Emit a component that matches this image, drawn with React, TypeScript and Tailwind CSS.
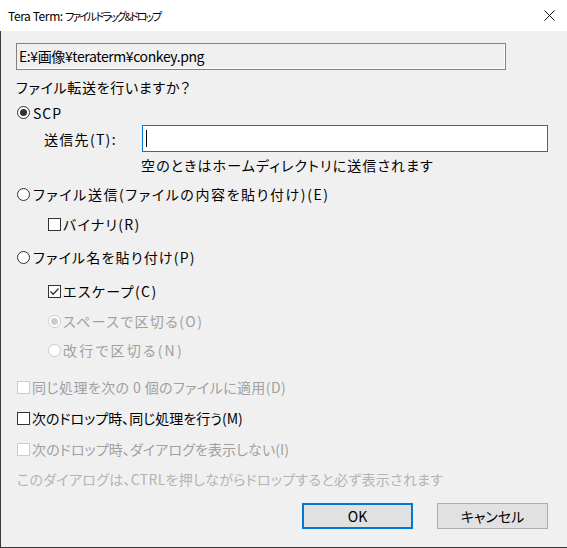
import React from 'react';

const font = { fontFamily: '"Noto Sans CJK JP", "Noto Sans", sans-serif' };

function Radio({ checked, disabled }: { checked?: boolean; disabled?: boolean }) {
  return (
    <span
      className={`flex h-[13px] w-[13px] shrink-0 items-center justify-center rounded-full border bg-white ${
        disabled ? 'border-[#cccccc]' : 'border-[#333333]'
      }`}
    >
      {checked && (
        <span className={`h-[7px] w-[7px] rounded-full ${disabled ? 'bg-[#cccccc]' : 'bg-[#333333]'}`} />
      )}
    </span>
  );
}

function Check({ checked, disabled }: { checked?: boolean; disabled?: boolean }) {
  return (
    <span
      className={`flex h-[13px] w-[13px] shrink-0 items-center justify-center border bg-white ${
        disabled ? 'border-[#cccccc]' : 'border-[#333333]'
      }`}
    >
      {checked && (
        <svg width="11" height="11" viewBox="0 0 11 11">
          <path d="M1.5 5.5 L4.2 8.2 L9.5 2.5" fill="none" stroke="#333333" strokeWidth="1.3" />
        </svg>
      )}
    </span>
  );
}

export default function App() {
  const gray = 'text-[#a0a0a0]';

  return (
    <div
      className="flex h-[548px] w-[567px] flex-col bg-[#f0f0f0] text-[14px] leading-[18px] text-black [font-feature-settings:'palt']"
      style={font}
    >
      {/* Title bar */}
      <div className="flex h-[31px] shrink-0 items-center justify-between bg-white pl-[8px] pr-[12px]">
        <span className="whitespace-nowrap text-[12px] leading-[16px] tracking-[-0.4px]">
          Tera Term: <span className="text-[11px] tracking-[-2px]">ファイル ドラッグ&amp;ドロップ</span>
        </span>
        <svg width="11" height="11" viewBox="0 0 11 11">
          <path d="M0.5 0.5 L10.5 10.5 M10.5 0.5 L0.5 10.5" stroke="#111" strokeWidth="1" />
        </svg>
      </div>

      <div className="flex flex-1 flex-col border-b border-l border-[#3a3a3a] pl-[15px] pr-[19px]">
        {/* Path */}
        <div className="mt-[12px] h-[27px] w-[490px] border border-[#828282]">
          <div className="flex h-full items-center border-b border-r border-white pl-[2px] text-[14px] tracking-[-0.4px]">
            E:¥画像¥teraterm¥conkey.png
          </div>
        </div>

        <div className="mt-[4px] flex h-[26px] items-center tracking-[0.7px]">ファイル転送を行いますか？</div>

        <div className="flex h-[25px] items-center gap-[3px] pl-[1px] tracking-[1px]">
          <Radio checked />
          <span>SCP</span>
        </div>

        <div className="flex h-[27px] items-center">
          <span className="w-[126px] shrink-0 whitespace-nowrap pl-[28px] tracking-[1.3px]">送信先(T):</span>
          <div className="flex h-[27px] flex-1 items-center border border-[#0078d7] bg-white pl-[3px]">
            <span className="h-[17px] w-[1px] bg-black" />
          </div>
        </div>

        <div className="flex h-[26px] items-center pl-[125px] tracking-[1.1px]">空のときはホームディレクトリに送信されます</div>

        <div className="flex h-[32px] items-center gap-[3px] pl-[1px] tracking-[1.6px]">
          <Radio />
          <span>ファイル送信(ファイルの内容を貼り付け)(E)</span>
        </div>

        <div className="flex h-[28px] items-center gap-[2px] pl-[32px] tracking-[1.3px]">
          <Check />
          <span>バイナリ(R)</span>
        </div>

        <div className="flex h-[38px] items-center gap-[3px] pl-[1px] tracking-[1.2px]">
          <Radio />
          <span>ファイル名を貼り付け(P)</span>
        </div>

        <div className="flex h-[30px] items-center gap-[2px] pl-[32px] tracking-[1.4px]">
          <Check checked />
          <span>エスケープ(C)</span>
        </div>

        <div className={`flex h-[30px] items-center gap-[2px] pl-[32px] tracking-[1.4px] ${gray}`}>
          <Radio checked disabled />
          <span>スペースで区切る(O)</span>
        </div>

        <div className={`flex h-[28px] items-center gap-[2px] pl-[32px] tracking-[2.2px] ${gray}`}>
          <Radio disabled />
          <span>改行で区切る(N)</span>
        </div>

        <div className={`mt-[8px] flex h-[30px] items-center gap-[2px] pl-[1px] tracking-[0.4px] ${gray}`}>
          <Check disabled />
          <span>同じ処理を次の 0 個のファイルに適用(D)</span>
        </div>

        <div className="flex h-[32px] items-center gap-[2px] pl-[1px]">
          <Check />
          <span>次のドロップ時、同じ処理を行う(M)</span>
        </div>

        <div className={`flex h-[30px] items-center gap-[2px] pl-[1px] tracking-[0.1px] ${gray}`}>
          <Check disabled />
          <span>次のドロップ時、ダイアログを表示しない(I)</span>
        </div>

        <div className="flex h-[30px] items-center pl-[1px] tracking-[0.3px] text-[#b4b4b4]">
          このダイアログは、CTRLを押しながらドロップすると必ず表示されます
        </div>

        <div className="mt-[9px] flex justify-end gap-[24px]">
          <button className="flex h-[26px] w-[111px] items-center justify-center border-2 border-[#0078d7] bg-[#e1e1e1] text-[14px]">
            OK
          </button>
          <button className="flex h-[26px] w-[111px] items-center justify-center border border-[#adadad] bg-[#e1e1e1] text-[14px]">
            キャンセル
          </button>
        </div>
      </div>
    </div>
  );
}
